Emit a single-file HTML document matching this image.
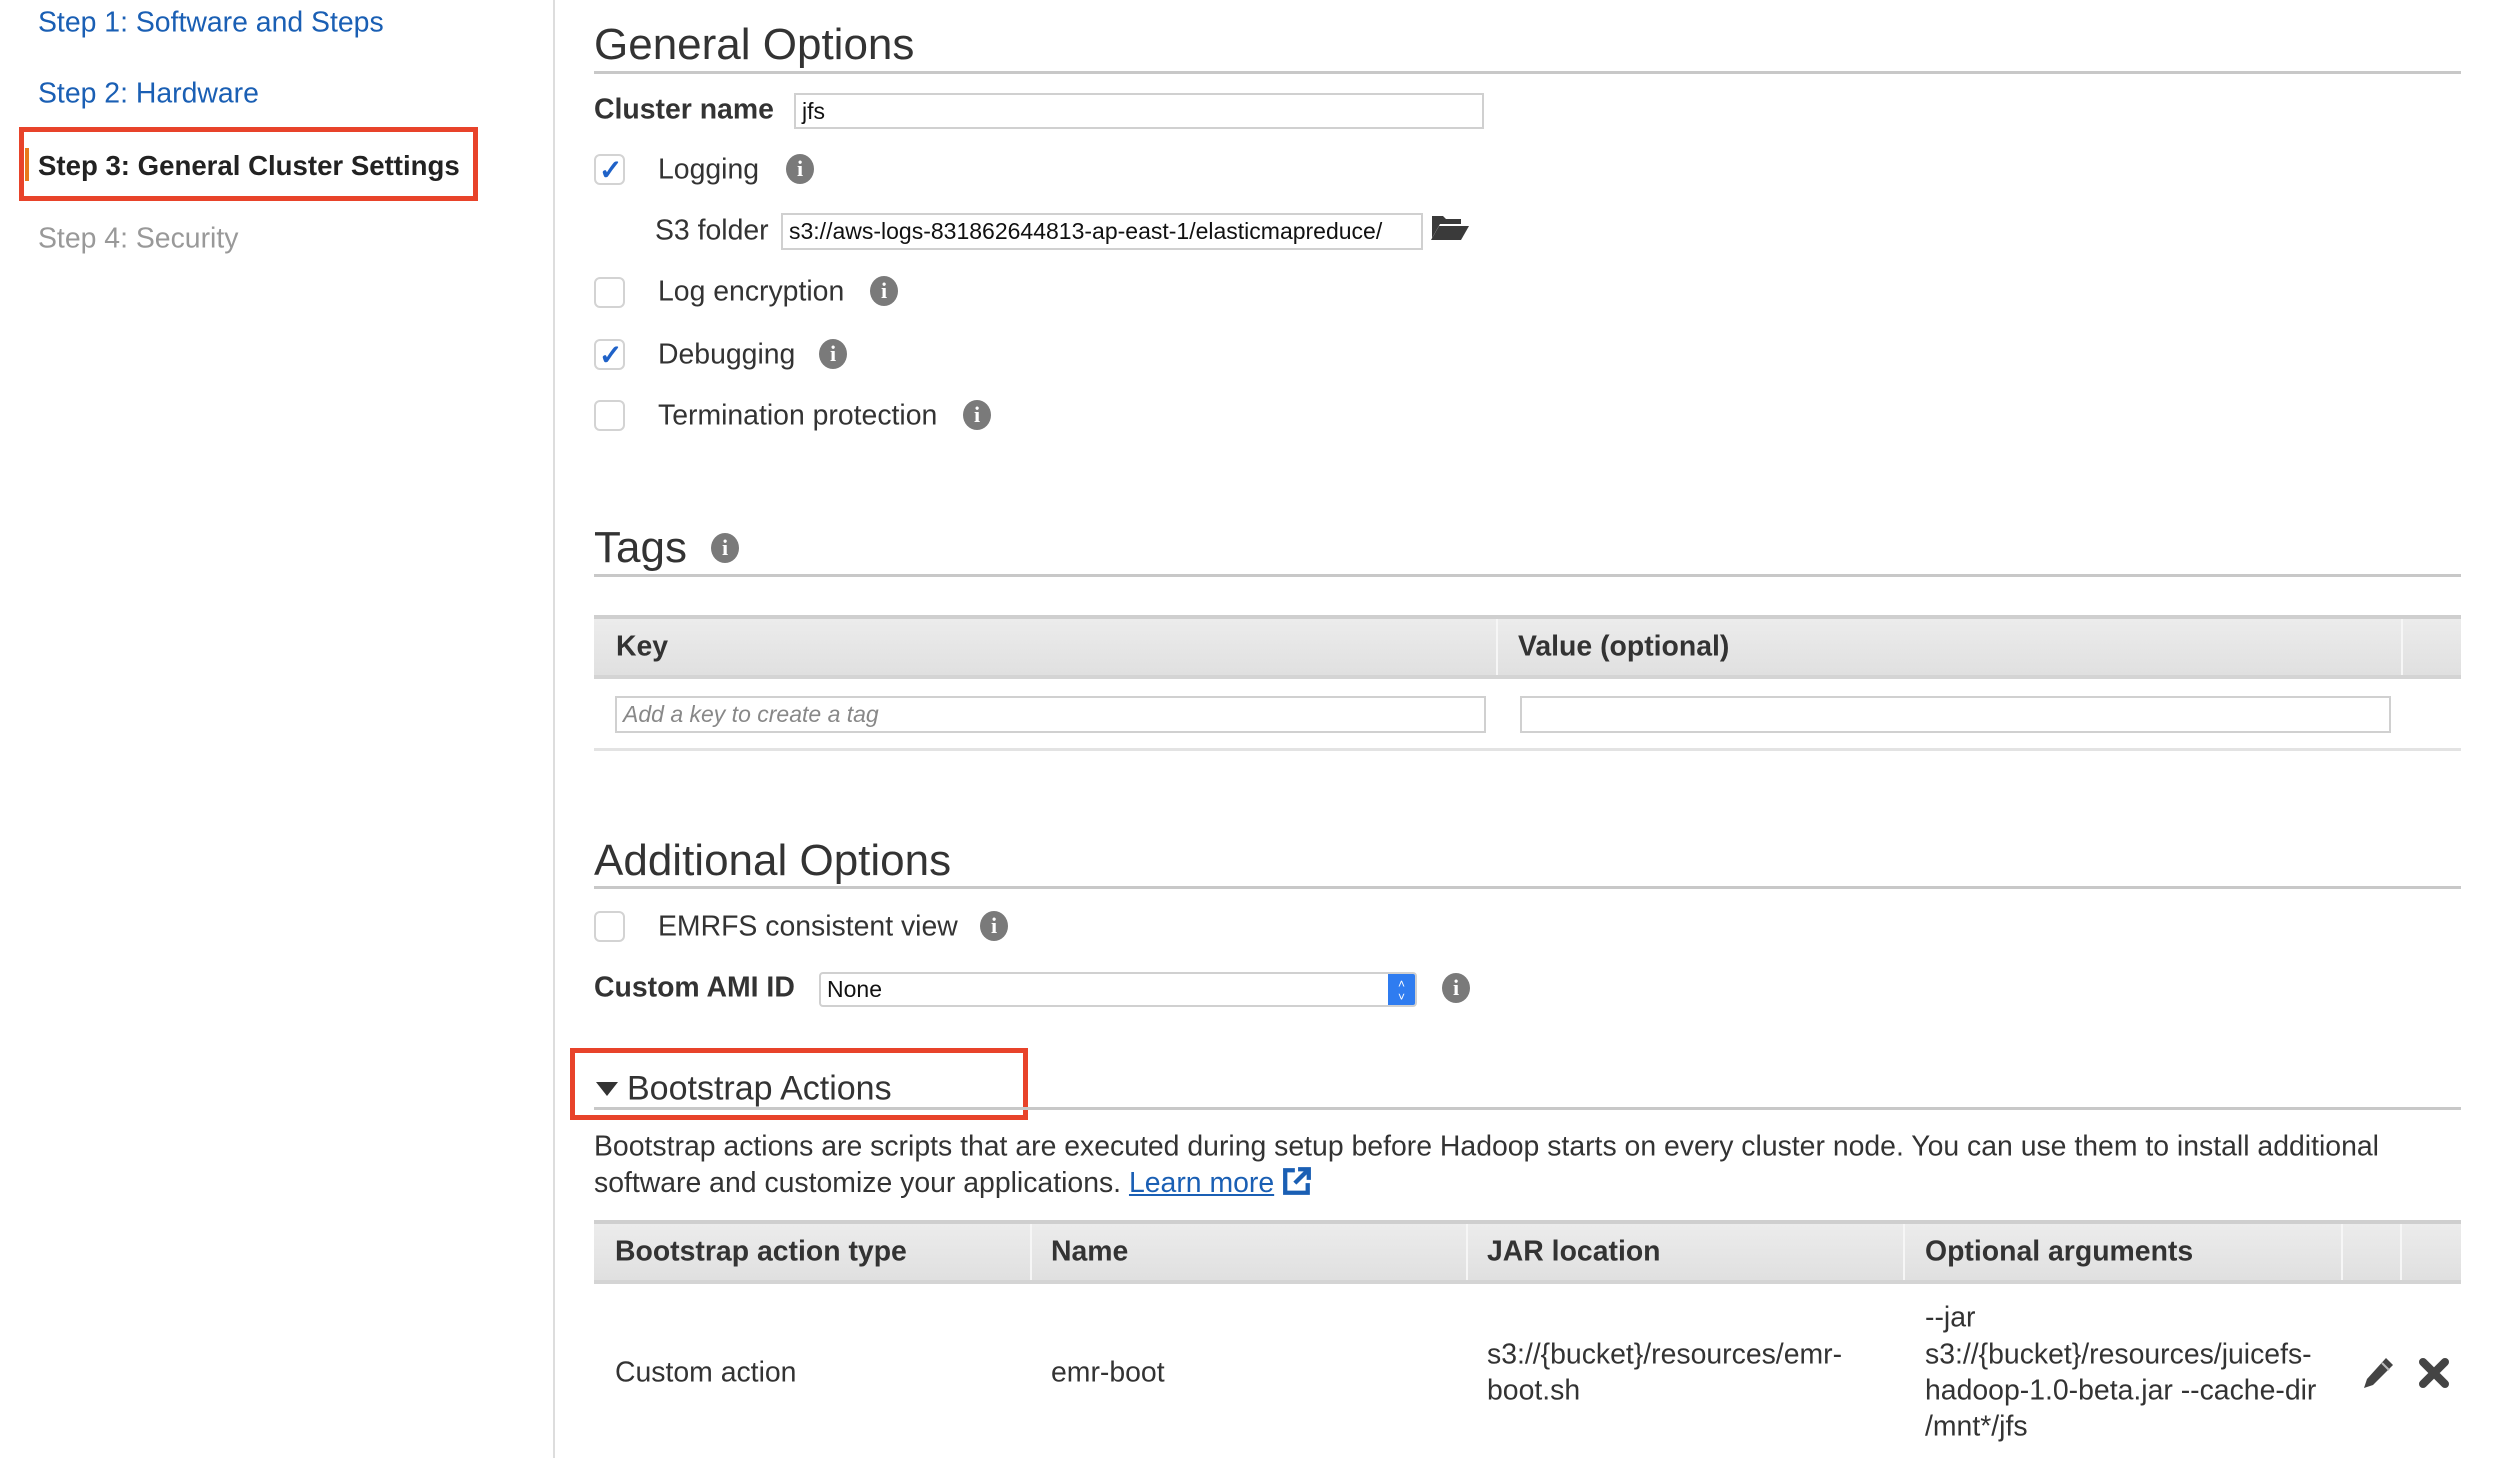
<!DOCTYPE html>
<html><head><meta charset="utf-8"><style>
*{margin:0;padding:0;box-sizing:border-box}
body{width:2520px;height:1458px;background:#fff;font-family:"Liberation Sans",Arial,sans-serif;color:#333;position:relative;overflow:hidden;font-size:28.4px}
.a{position:absolute;white-space:nowrap}
.c{transform:translateY(-50%)}
.step{font-size:28.4px;color:#1a5fb4}
.h1{font-size:44px;color:#333}
.rule{position:absolute;left:594px;width:1867px;height:3px;background:#c8c8c8}
.cb{position:absolute;left:594px;width:31px;height:31px;border:2px solid #d3d3d3;border-radius:6px;background:#fff}
.info{position:absolute;width:28px;height:30px;border-radius:50%;background:#7a7a7a;color:#fff;font:bold 22px "Liberation Serif",serif;text-align:center;line-height:30px}
.inp{position:absolute;border:2px solid #d0d0d0;background:#fff;font-size:23px;color:#111;padding-left:6px;display:flex;align-items:center}
.th{position:absolute;left:594px;width:1867px;background:linear-gradient(#ececec,#e0e0e0);border-top:4px solid #cfcfcf;border-bottom:4px solid #d4d4d4}
.vd{position:absolute;top:0;bottom:0;width:2px;background:#f6f6f6}
.b{font-weight:bold;color:#333}
</style></head><body>
<div class="a c step" style="left:38px;top:23px">Step 1: Software and Steps</div>
<div class="a c step" style="left:38px;top:94px">Step 2: Hardware</div>
<div style="position:absolute;left:19px;top:127px;width:459px;height:74px;border:5px solid #e8432a"></div>
<div style="position:absolute;left:25px;top:148px;width:4px;height:33px;background:#e87a1c"></div>
<div class="a c b" style="left:38px;top:166px;font-size:27.6px;color:#222">Step 3: General Cluster Settings</div>
<div class="a c step" style="left:38px;top:239px;color:#999">Step 4: Security</div>
<div style="position:absolute;left:553px;top:0;width:2px;height:1458px;background:#ddd"></div>

<div class="a c h1" style="left:594px;top:45px">General Options</div>
<div class="rule" style="top:71px"></div>
<div class="a c b" style="left:594px;top:110px">Cluster name</div>
<div class="inp" style="left:794px;top:93px;width:690px;height:36px">jfs</div>

<div class="cb" style="top:154px"></div><div class="a c" style="left:599px;top:170px;color:#1f62c8;font-size:28px;font-weight:bold">✓</div>
<div class="a c" style="left:658px;top:170px">Logging</div><div class="info" style="left:786px;top:154px">i</div>
<div class="a c" style="left:655px;top:231px">S3 folder</div>
<div class="inp" style="left:781px;top:213px;width:642px;height:37px">s3://aws-logs-831862644813-ap-east-1/elasticmapreduce/</div>
<svg style="position:absolute;left:1430px;top:212px" width="40" height="30" viewBox="0 0 40 30"><path d="M2 4h11l3 3h15v5H10L2 26z" fill="#3a3a3a"/><path d="M9 14h30l-8 14H1z" fill="#3a3a3a"/></svg>

<div class="cb" style="top:277px"></div>
<div class="a c" style="left:658px;top:292px">Log encryption</div><div class="info" style="left:870px;top:276px">i</div>
<div class="cb" style="top:339px"></div><div class="a c" style="left:599px;top:355px;color:#1f62c8;font-size:28px;font-weight:bold">✓</div>
<div class="a c" style="left:658px;top:355px">Debugging</div><div class="info" style="left:819px;top:339px">i</div>
<div class="cb" style="top:400px"></div>
<div class="a c" style="left:658px;top:416px">Termination protection</div><div class="info" style="left:963px;top:400px">i</div>

<div class="a c h1" style="left:594px;top:548px">Tags</div><div class="info" style="left:711px;top:533px">i</div>
<div class="rule" style="top:574px"></div>
<div class="th" style="top:615px;height:64px">
<div class="vd" style="left:902px"></div><div class="vd" style="left:1807px"></div>
<div class="a c b" style="left:22px;top:28px">Key</div>
<div class="a c b" style="left:924px;top:28px">Value (optional)</div>
</div>
<div class="inp" style="left:615px;top:696px;width:871px;height:37px;color:#888;font-style:italic">Add a key to create a tag</div>
<div class="inp" style="left:1520px;top:696px;width:871px;height:37px"></div>
<div class="rule" style="top:748px;background:#e3e3e3"></div>

<div class="a c h1" style="left:594px;top:861px">Additional Options</div>
<div class="rule" style="top:886px"></div>
<div class="cb" style="top:911px"></div>
<div class="a c" style="left:658px;top:927px">EMRFS consistent view</div><div class="info" style="left:980px;top:911px">i</div>
<div class="a c b" style="left:594px;top:988px">Custom AMI ID</div>
<div class="inp" style="left:819px;top:972px;width:598px;height:35px;border-radius:4px;overflow:hidden">None<div style="position:absolute;right:0;top:0;bottom:0;width:27px;background:#2f7cf0;color:#fff;font-size:12px;line-height:13px;text-align:center;padding-top:4px">˄<br>˅</div></div>
<div class="info" style="left:1442px;top:973px">i</div>

<div style="position:absolute;left:570px;top:1048px;width:458px;height:72px;border:5px solid #e8432a"></div>
<svg style="position:absolute;left:596px;top:1082px" width="22" height="14" viewBox="0 0 22 14"><path d="M0 0h22L11 14z" fill="#333"/></svg>
<div class="a c" style="left:627px;top:1089px;font-size:34px;color:#333">Bootstrap Actions</div>
<div class="rule" style="top:1107px"></div>
<div class="a c" style="left:594px;top:1147px">Bootstrap actions are scripts that are executed during setup before Hadoop starts on every cluster node. You can use them to install additional</div>
<div class="a c" style="left:594px;top:1183px">software and customize your applications. <span style="color:#1a5fb4;text-decoration:underline">Learn more</span> <svg width="30" height="30" viewBox="0 0 28 28" style="vertical-align:-4px"><path d="M12 4H3v21h21v-9" fill="none" stroke="#1a5fb4" stroke-width="4"/><path d="M15 3h10v10M25 3L12 16" fill="none" stroke="#1a5fb4" stroke-width="4"/></svg></div>

<div class="th" style="top:1220px;height:64px">
<div class="vd" style="left:436px"></div><div class="vd" style="left:872px"></div><div class="vd" style="left:1309px"></div><div class="vd" style="left:1747px"></div><div class="vd" style="left:1806px"></div>
<div class="a c b" style="left:21px;top:28px">Bootstrap action type</div>
<div class="a c b" style="left:457px;top:28px">Name</div>
<div class="a c b" style="left:893px;top:28px">JAR location</div>
<div class="a c b" style="left:1331px;top:28px">Optional arguments</div>
</div>
<div class="a c" style="left:615px;top:1373px">Custom action</div>
<div class="a c" style="left:1051px;top:1373px">emr-boot</div>
<div class="a c" style="left:1487px;top:1355px">s3://{bucket}/resources/emr-</div>
<div class="a c" style="left:1487px;top:1391px">boot.sh</div>
<div class="a c" style="left:1925px;top:1318px">--jar</div>
<div class="a c" style="left:1925px;top:1355px">s3://{bucket}/resources/juicefs-</div>
<div class="a c" style="left:1925px;top:1391px">hadoop-1.0-beta.jar --cache-dir</div>
<div class="a c" style="left:1925px;top:1427px">/mnt*/jfs</div>
<svg style="position:absolute;left:2362px;top:1355px" width="34" height="36" viewBox="0 0 34 36"><path d="M24 3l7 7L11 30 2 33l3-9z" fill="#444"/><path d="M20 8l7 7" stroke="#bbb" stroke-width="2"/></svg>
<svg style="position:absolute;left:2418px;top:1357px" width="32" height="32" viewBox="0 0 32 32"><path d="M5 5L27 27M27 5L5 27" stroke="#444" stroke-width="8" stroke-linecap="round"/></svg>
</body></html>
